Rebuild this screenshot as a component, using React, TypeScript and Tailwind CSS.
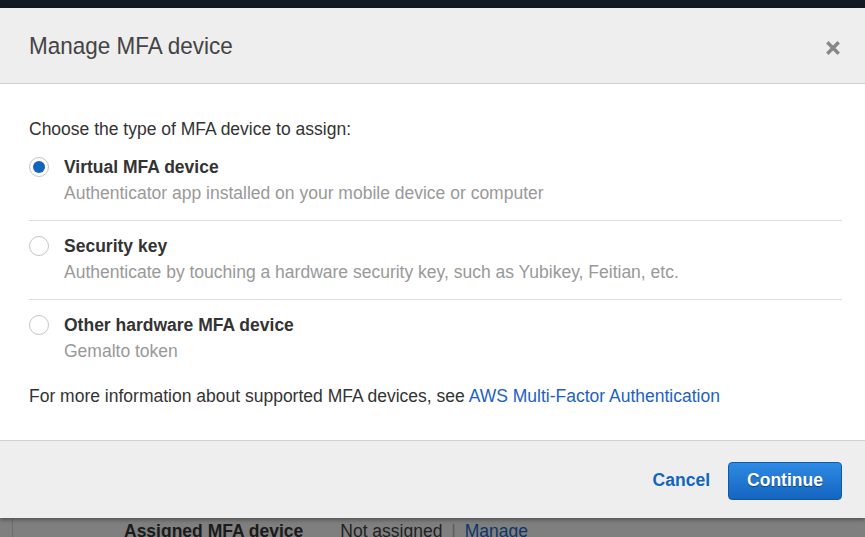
import { useState } from "react";

const options = [
  {
    id: "virtual",
    title: "Virtual MFA device",
    text: "Authenticator app installed on your mobile device or computer",
  },
  {
    id: "key",
    title: "Security key",
    text: "Authenticate by touching a hardware security key, such as Yubikey, Feitian, etc.",
  },
  {
    id: "hardware",
    title: "Other hardware MFA device",
    text: "Gemalto token",
  },
];

function Radio({ checked }: { checked: boolean }) {
  return (
    <span className="flex h-5 w-5 shrink-0 items-center justify-center rounded-full border border-[#c6c6c6] bg-white">
      {checked && <span className="h-3 w-3 rounded-full bg-[#1166bb]" />}
    </span>
  );
}

export default function App() {
  const [selected, setSelected] = useState("virtual");

  return (
    <div className="flex h-[537px] w-full flex-col overflow-hidden bg-[#7f7f7f] font-['Liberation_Sans',Arial,sans-serif] text-[17.5px] text-[#333]">
      <div className="h-2 shrink-0 bg-[#121a23]" />

      {/* dialog */}
      <div className="relative z-10 shrink-0 shadow-[0_2px_4px_rgba(0,0,0,0.35)]">
        <div className="flex h-[76px] items-center justify-between border-b border-[#cfcfcf] bg-[#eeeeee] pl-[29px] pr-[22px] pt-1">
          <h1 className="origin-left scale-y-[1.06] text-[22.5px] leading-none text-[#444]">
            Manage MFA device
          </h1>
          <button className="flex h-5 w-5 items-center justify-center">
            <svg width="14" height="14" viewBox="0 0 14 14">
              <path d="M2.5 2.5 L11.5 11.5 M11.5 2.5 L2.5 11.5" stroke="#888" strokeWidth="3.4" strokeLinecap="square" />
            </svg>
          </button>
        </div>

        <div className="bg-white pl-[29px] pr-[23px] pt-[35px] pb-[34px]">
          <p className="leading-5">Choose the type of MFA device to assign:</p>
          <div className="mt-[18px]">
            {options.map((o, i) => (
              <div
                key={o.id}
                onClick={() => setSelected(o.id)}
                className={`flex cursor-pointer gap-[15px] ${
                  i < options.length - 1 ? "border-b border-[#dddddd] pb-[17px]" : ""
                } ${i > 0 ? "pt-[15px]" : ""}`}
              >
                <Radio checked={selected === o.id} />
                <div>
                  <div className="font-bold leading-5 text-[#333]">{o.title}</div>
                  <div className="mt-1.5 leading-5 text-[#999]">{o.text}</div>
                </div>
              </div>
            ))}
          </div>
          <p className="mt-[25px] leading-5">
            For more information about supported MFA devices, see{" "}
            <a href="#" className="text-[#1d62c0]">
              AWS Multi-Factor Authentication
            </a>
          </p>
        </div>

        <div className="flex h-[78px] items-center justify-end gap-[18px] border-t border-[#cfcfcf] bg-[#eeeeee] pr-[23px] pt-0.5">
          <button className="font-bold text-[#1166bb]">Cancel</button>
          <button className="h-[38px] w-[114px] rounded-[4px] border border-[#0f5aa8] bg-gradient-to-b from-[#2d8ae4] to-[#1565c0] font-bold text-white [text-shadow:0_1px_1px_rgba(0,0,0,0.4)]">
            Continue
          </button>
        </div>
      </div>

      {/* page behind the overlay */}
      <div className="flex flex-1">
        <div className="w-[13px] border-r border-[#6c6c6c]" />
        <div className="flex items-end gap-[37px] pl-[111px] pt-[3px] leading-5">
          <span className="font-bold text-[#1b1b1b]">Assigned MFA device</span>
          <span className="text-[#222]">
            Not assigned <span className="mx-1 text-[#5c5c5c]">|</span>{" "}
            <span className="text-[#0d3668]">Manage</span>
          </span>
        </div>
      </div>
    </div>
  );
}
